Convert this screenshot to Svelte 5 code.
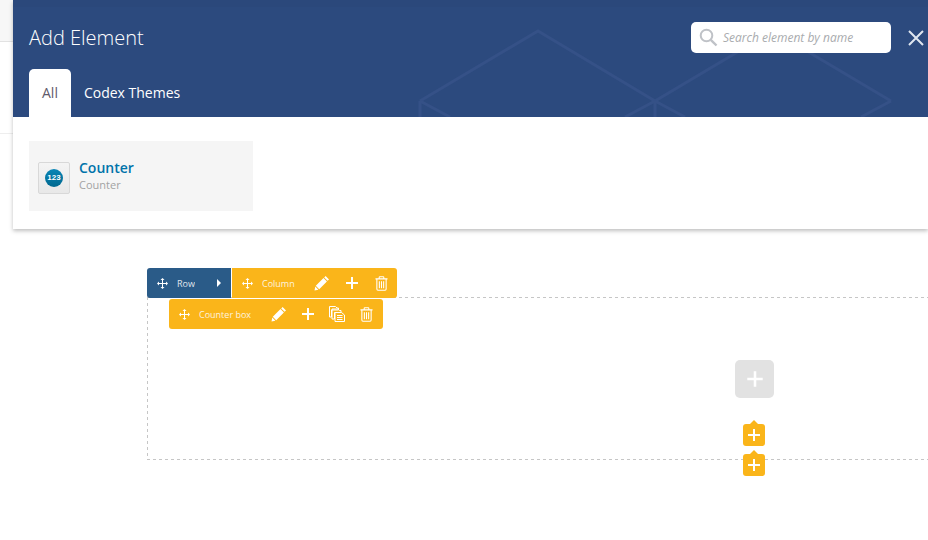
<script>
	const tabs = ['All', 'Codex Themes'];
	let active = 'All';
</script>

{#snippet moveIcon()}
	<svg class="ico-move" width="11" height="11" viewBox="0 0 11 11" fill="currentColor">
		<path d="M5 2H6V5H9V6H6V9H5V6H2V5H5Z" />
		<path d="M5.5 0 7.5 2H3.5ZM5.5 11 3.5 9H7.5ZM0 5.5 2 3.5V7.5ZM11 5.5 9 7.5V3.5Z" />
	</svg>
{/snippet}

{#snippet pencilIcon()}
	<svg width="16" height="16" viewBox="0 0 16 16" fill="currentColor">
		<path d="M11.6 1 15 4.4 13.6 5.8 10.2 2.4ZM9.5 3.1 12.9 6.5 5.2 14.2 1.8 10.8ZM1.3 11.6 4.4 14.7 0.5 15.5Z" />
	</svg>
{/snippet}

{#snippet plusIcon()}
	<svg width="14" height="14" viewBox="0 0 14 14" fill="currentColor">
		<path d="M6 1H8V6H13V8H8V13H6V8H1V6H6Z" />
	</svg>
{/snippet}

{#snippet trashIcon()}
	<svg class="trash" width="13" height="15" viewBox="0 0 14 16" fill="none" stroke="currentColor" stroke-width="1.15">
		<path d="M.5 3H13.5M4.5 3V1.5Q4.5 .8 5.2 .8H8.8Q9.5 .8 9.5 1.5V3M2 3V14Q2 15.3 3.2 15.3H10.8Q12 15.3 12 14V3M4.7 5.5V13M7 5.5V13M9.3 5.5V13" />
	</svg>
{/snippet}

{#snippet copyIcon()}
	<svg width="16" height="16" viewBox="0 0 16 16" fill="none" stroke="currentColor" stroke-width="1">
		<path d="M.5.5H6.5L8 2H9.5V4H2.5V11H.5Z" />
		<path d="M3 3H9L10.5 4.5H12V6.5H5.5V13H3Z" />
		<path d="M6 6.5H12.5L15.5 9V15.5H6ZM8 9.5H13.5M8 11.5H13.5M8 13.5H13.5" />
	</svg>
{/snippet}

<div class="page">
	<div class="backdrop"></div>

	<section class="modal">
		<header class="modal-head">
			<svg class="pattern" width="915" height="117" viewBox="0 0 915 117" fill="none" stroke="#355187" stroke-width="3">
				<path d="M407 101 525 31 642 101 760 31 878 101" />
				<path d="M407 101V117M642 101V117M407 101 437 117M642 101 612 117M642 101 672 117M878 101 848 117" />
			</svg>
			<div class="head-row">
				<h1>Add Element</h1>
				<div class="search">
					<svg width="19" height="19" viewBox="0 0 19 19" fill="none" stroke="#bfc2c7" stroke-width="2">
						<circle cx="7.5" cy="7.5" r="5.8" />
						<path d="M11.8 11.8 17.5 17.5" stroke-width="2.4" />
					</svg>
					<span>Search element by name</span>
				</div>
				<svg class="close" width="16" height="16" viewBox="0 0 16 16" stroke="#dfe6f0" stroke-width="2">
					<path d="M1 1 15 15M15 1 1 15" />
				</svg>
			</div>
			<nav class="tabs">
				{#each tabs as tab}
					<span class="tab" class:active={tab === active}>{tab}</span>
				{/each}
			</nav>
		</header>
		<div class="modal-body">
			<div class="element">
				<div class="element-icon">
					<span class="badge">123</span>
				</div>
				<div class="element-text">
					<strong>Counter</strong>
					<small>Counter</small>
				</div>
			</div>
		</div>
	</section>

	<section class="canvas">
		<div class="row-box">
			<div class="bars">
				<div class="bar bar-row">
					{@render moveIcon()}
					<span class="label">Row</span>
					<span class="caret"></span>
				</div>
				<div class="bar bar-col">
					{@render moveIcon()}
					<span class="label">Column</span>
					<span class="actions">
						{@render pencilIcon()}
						{@render plusIcon()}
						{@render trashIcon()}
					</span>
				</div>
			</div>
			<div class="bar bar-el">
				{@render moveIcon()}
				<span class="label">Counter box</span>
				<span class="actions">
					{@render pencilIcon()}
					{@render plusIcon()}
					{@render copyIcon()}
					{@render trashIcon()}
				</span>
			</div>
			<button class="add-grey">{@render plusIcon()}</button>
			<button class="add-yellow first">{@render plusIcon()}</button>
			<button class="add-yellow second">{@render plusIcon()}</button>
		</div>
	</section>
</div>

<style>
	:global(body) {
		background: #fff;
		overflow: hidden;
	}

	.page {
		position: relative;
		width: 928px;
		height: 540px;
		overflow: hidden;
		font-family: 'Open Sans', 'DejaVu Sans', sans-serif;
	}

	.backdrop {
		position: absolute;
		left: 0;
		top: 0;
		width: 13px;
		height: 133px;
		background: linear-gradient(#f7f7f7 0 41px, #e2e2e2 41px 42px, #fff 42px 133px);
		border-bottom: 1px solid #eee;
	}

	.modal {
		position: relative;
		margin-left: 13px;
		height: 229px;
		background: #fff;
		box-shadow: 0 2px 4px rgba(0, 0, 0, 0.25);
	}

	.modal-head {
		position: relative;
		height: 117px;
		box-sizing: border-box;
		padding: 22px 0 0 16px;
		background: #2c4a7e;
		border-top: 7px solid #2b487b;
		background-clip: padding-box;
		overflow: hidden;
	}

	.pattern {
		position: absolute;
		left: 0;
		top: -7px;
	}

	.head-row {
		position: relative;
		display: flex;
		align-items: center;
		height: 31px;
		margin-top: -7px;
	}

	h1 {
		margin: 0;
		font-size: 20px;
		font-weight: 300;
		color: #fff;
		line-height: 31px;
	}

	.search {
		display: flex;
		align-items: center;
		gap: 5px;
		box-sizing: border-box;
		width: 200px;
		height: 31px;
		margin-left: auto;
		padding-left: 8px;
		background: #fff;
		border-radius: 5px;
		font-size: 12px;
		font-style: italic;
		color: #a9abae;
	}

	.close {
		margin: 0 4px 0 17px;
	}

	.tabs {
		position: relative;
		display: flex;
		margin-top: 16px;
	}

	.tab {
		height: 48px;
		padding: 0 13px;
		font-size: 14px;
		line-height: 48px;
		color: #fff;
		border-radius: 5px 5px 0 0;
	}

	.tab.active {
		background: #fff;
		color: #5f5a6b;
	}

	.modal-body {
		padding: 24px 16px;
	}

	.element {
		display: flex;
		align-items: center;
		gap: 9px;
		box-sizing: border-box;
		width: 224px;
		height: 70px;
		padding-left: 9px;
		background: #f5f5f5;
	}

	.element-icon {
		display: flex;
		align-items: center;
		justify-content: center;
		box-sizing: border-box;
		width: 32px;
		height: 32px;
		margin-top: 4px;
		background: linear-gradient(#f4f4f4, #e8e8e8);
		border: 1px solid #d8d8d8;
		border-radius: 2px;
	}

	.badge {
		width: 18px;
		height: 18px;
		border-radius: 50%;
		background: linear-gradient(#0a86b6, #00688f);
		color: #fff;
		font: bold 8px/18px 'Liberation Sans', sans-serif;
		text-align: center;
	}

	.element-text {
		display: flex;
		flex-direction: column;
	}

	.element-text strong {
		font-size: 14px;
		font-weight: 600;
		line-height: 18px;
		color: #0073aa;
	}

	.element-text small {
		font-size: 11px;
		line-height: 16px;
		color: #a3a3a3;
	}

	.canvas {
		padding: 68px 0 0 147px;
	}

	/* dashes are 3 on, 3 off, a plain dashed border comes out finer */
	.row-box {
		--dash: repeating-linear-gradient(90deg, #c6c6c6 0 3px, transparent 3px 6px);
		position: relative;
		box-sizing: border-box;
		width: 800px;
		height: 163px;
		background:
			var(--dash) left top / 100% 1px no-repeat,
			var(--dash) left bottom / 100% 1px no-repeat,
			repeating-linear-gradient(#c6c6c6 0 3px, transparent 3px 6px) left top / 1px 100% no-repeat;
	}

	.bars {
		position: absolute;
		left: 0;
		top: -29px;
		display: flex;
		gap: 1px;
	}

	.bar {
		display: flex;
		align-items: center;
		box-sizing: border-box;
		height: 30px;
		color: #fff;
		font-size: 9px;
	}

	.label {
		opacity: 0.85;
	}

	.bar-row {
		width: 84px;
		padding-left: 10px;
		background: #2a5b88;
		border-radius: 3px 0 0 3px;
	}

	.bar-row .label {
		margin-left: 9px;
	}

	.caret {
		margin-left: auto;
		margin-right: 10px;
		border-left: 4px solid #fff;
		border-top: 4px solid transparent;
		border-bottom: 4px solid transparent;
	}

	.bar-col {
		width: 165px;
		padding-left: 10px;
		background: #fab51a;
		border-radius: 0 3px 3px 0;
	}

	.bar-col .label {
		margin-left: 9px;
	}

	.bar-col .actions {
		margin-left: 19px;
		gap: 15px;
	}

	.bar-el {
		position: absolute;
		left: 22px;
		top: 2px;
		width: 214px;
		padding-left: 10px;
		background: #fab51a;
		border-radius: 3px;
	}

	.bar-el .label {
		margin-left: 9px;
	}

	.bar-el .actions {
		margin-left: 20px;
		gap: 14px;
	}

	.actions {
		display: flex;
		align-items: center;
	}

	.trash {
		margin-left: 1px;
	}

	button {
		position: absolute;
		display: flex;
		align-items: center;
		justify-content: center;
		padding: 0;
		border: 0;
		color: #fff;
	}

	.add-grey {
		left: 588px;
		top: 63px;
		width: 39px;
		height: 38px;
		background: #e2e2e2;
		border-radius: 5px;
	}

	.add-grey :global(svg) {
		width: 18px;
		height: 18px;
	}

	.add-yellow {
		left: 596px;
		width: 22px;
		height: 22px;
		background: #fab51a;
		border-radius: 3px;
	}

	.add-yellow::before {
		content: '';
		position: absolute;
		left: 7px;
		top: -4px;
		border-left: 4px solid transparent;
		border-right: 4px solid transparent;
		border-bottom: 4px solid #fab51a;
	}

	.first {
		top: 127px;
	}

	.second {
		top: 157px;
	}
</style>
